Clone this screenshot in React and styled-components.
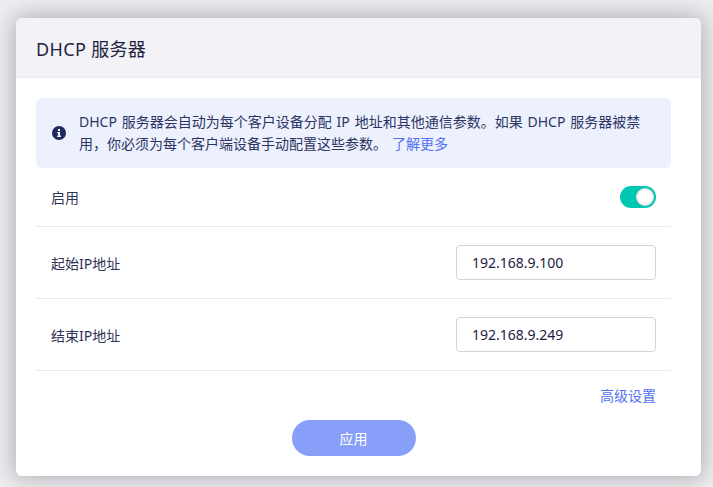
import React from 'react';
import styled, { createGlobalStyle } from 'styled-components';

const GlobalStyle = createGlobalStyle`
  html, body {
    margin: 0;
    padding: 0;
    height: 100%;
  }
  body {
    background-color: #eeeef1;
    font-family: "Noto Sans", "Noto Sans CJK SC", sans-serif;
    overflow: hidden;
  }
`;

const Page = styled.div`
  box-sizing: border-box;
  width: 713px;
  height: 487px;
  padding: 18px 12px 11px 16px;
`;

const Card = styled.div`
  height: 458px;
  border-radius: 6px;
  background-color: #fff;
  box-shadow: 0 0 22px 2px rgba(55, 55, 70, 0.36);
  overflow: hidden;
  display: flex;
  flex-direction: column;
`;

const Header = styled.div`
  box-sizing: border-box;
  height: 60px;
  flex: none;
  padding-left: 20px;
  display: flex;
  align-items: center;
  background-color: #f2f2f7;
  border-bottom: 1px solid #e9e9ef;
  color: #1e2340;
  font-size: 18px;
  letter-spacing: 0.35px;
`;

const Body = styled.div`
  flex: 1;
  padding: 20px 30px 20px 20px;
  display: flex;
  flex-direction: column;
`;

const Notice = styled.div`
  box-sizing: border-box;
  height: 70px;
  padding: 0 16px;
  display: flex;
  align-items: center;
  gap: 13px;
  border-radius: 6px;
  background-color: #edf1fe;
  color: #2b3462;
  font-size: 14px;
  line-height: 22px;
  word-spacing: 1.2px;
`;

const LearnMore = styled.a`
  color: #5470f5;
  margin-left: 5px;
`;

const Row = styled.div`
  box-sizing: border-box;
  height: ${(p) => p.$height}px;
  padding: 0 15px;
  display: flex;
  align-items: center;
  justify-content: space-between;
  border-bottom: 1px solid #e9e9ef;
  color: #2f3458;
  font-size: 14px;
`;

const Toggle = styled.div`
  box-sizing: border-box;
  width: 36px;
  height: 22px;
  padding: 2px;
  border-radius: 11px;
  background-color: #00c7b1;
  display: flex;
  justify-content: flex-end;
`;

const Knob = styled.div`
  width: 18px;
  height: 18px;
  border-radius: 50%;
  background-color: #fff;
  box-shadow: inset 0 0 3px rgba(0, 0, 0, 0.3);
`;

const Input = styled.input`
  box-sizing: border-box;
  width: 200px;
  height: 35px;
  padding: 0 15px;
  border: 1px solid #d3d3d8;
  border-radius: 4px;
  background-color: #fff;
  color: #1e2340;
  font-family: inherit;
  font-size: 14px;
  outline: none;
`;

const Advanced = styled.div`
  padding: 15px 15px 0;
  display: flex;
  justify-content: flex-end;
  color: #5470f5;
  font-size: 14px;
  line-height: 20px;
`;

const Footer = styled.div`
  margin-top: 14px;
  display: flex;
  justify-content: center;
`;

const ApplyButton = styled.button`
  width: 124px;
  height: 36px;
  border: none;
  border-radius: 18px;
  background-color: #889ffa;
  color: #fff;
  font-family: inherit;
  font-size: 14px;
`;

const InfoIcon = () => (
  <svg width="14" height="14" viewBox="0 0 14 14" style={{ flex: 'none' }}>
    <circle cx="7" cy="7" r="7" fill="#1e2a5e" />
    <rect x="6" y="3" width="2" height="2" fill="#fff" />
    <path d="M5.2 6h2.8v3.8h.9V11H5.2V9.8h1V7.2h-1z" fill="#fff" />
  </svg>
);

const App = () => (
  <Page>
    <GlobalStyle />
    <Card>
      <Header>DHCP 服务器</Header>
      <Body>
        <Notice>
          <InfoIcon />
          <div>
            DHCP 服务器会自动为每个客户设备分配 IP 地址和其他通信参数。如果 DHCP 服务器被禁用，你必须为每个客户端设备手动配置这些参数。
            <LearnMore>了解更多</LearnMore>
          </div>
        </Notice>
        <Row $height={59}>
          <span>启用</span>
          <Toggle>
            <Knob />
          </Toggle>
        </Row>
        <Row $height={72}>
          <span>起始IP地址</span>
          <Input defaultValue="192.168.9.100" />
        </Row>
        <Row $height={72}>
          <span>结束IP地址</span>
          <Input defaultValue="192.168.9.249" />
        </Row>
        <Advanced>高级设置</Advanced>
        <Footer>
          <ApplyButton>应用</ApplyButton>
        </Footer>
      </Body>
    </Card>
  </Page>
);

export default App;
